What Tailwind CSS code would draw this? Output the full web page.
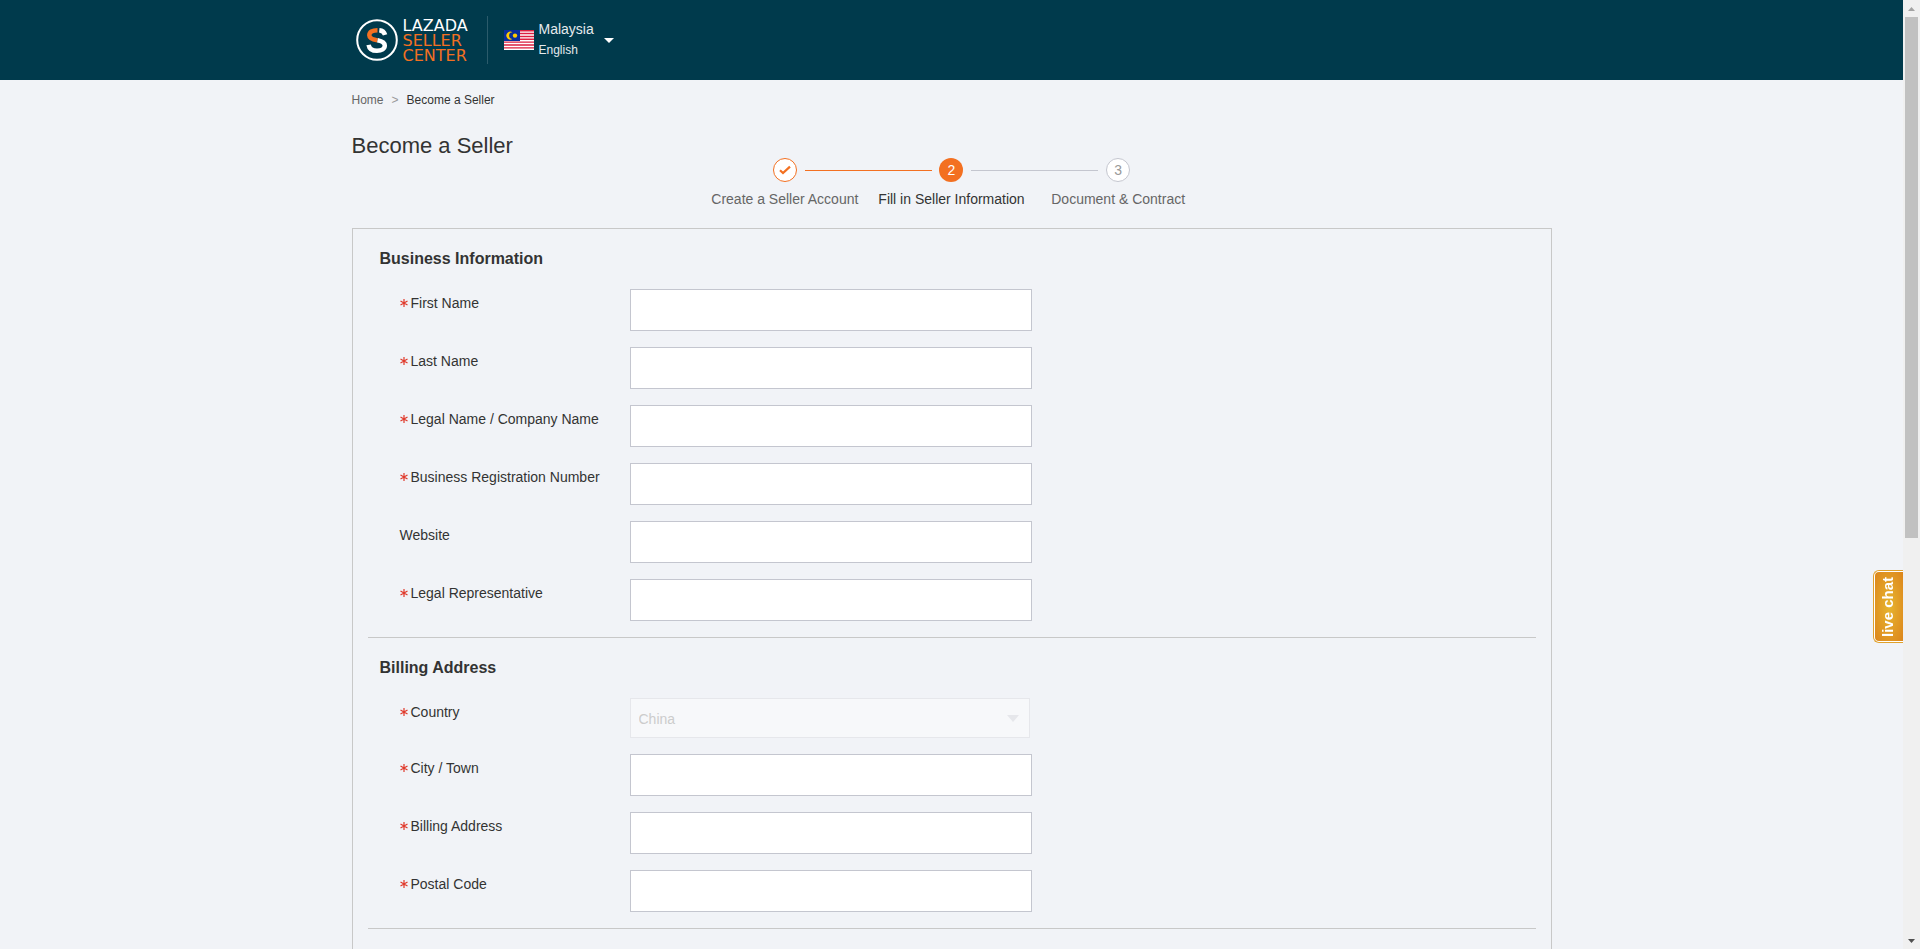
<!DOCTYPE html>
<html lang="en">
<head>
    <meta charset="UTF-8">
    <meta name="viewport" content="width=device-width, initial-scale=1.0">
    <title>Become a Seller</title>
    <script src="https://cdn.jsdelivr.net/npm/@tailwindcss/browser@4"></script>
</head>
<body class="flex h-screen overflow-hidden bg-[#f1f3f7] font-['Liberation_Sans',Arial,sans-serif] text-sm text-[#333]">
    <div class="flex-1 overflow-hidden">
        <header class="bg-[#003a4c]">
            <div class="mx-auto flex h-20 max-w-[1200px] items-center">
                <a href="#" class="flex items-center gap-[5px] pl-1" aria-label="Lazada Seller Center">
                    <svg class="size-[42px]" viewBox="0 0 42 42" fill="none">
                        <circle cx="21" cy="21" r="19.8" stroke="#fff" stroke-width="2"/>
                        <path d="M21.500 11.200c-5 0-8.200 1.900-8.200 5 0 3 3 4.200 8.200 5.200" stroke="#f37021" stroke-width="4.500"/>
                        <path d="M23.300 11.200c3 .3 5 1.800 5.800 4.600" stroke="#fff" stroke-width="4.500"/>
                        <path d="M21.500 21.200c4.900 1 7.300 2.500 7.300 5.300 0 3.200-3.200 5.300-7.800 5.300-4.800 0-7.800-2.200-8.400-6" stroke="#fff" stroke-width="4.500"/>
                    </svg>
                    <span class="flex w-[72px] flex-col font-['DejaVu_Sans',sans-serif] text-base leading-[15px] text-[#f37021]">
                        <span class="text-white">LAZADA</span>
                        <span>SELLER</span>
                        <span>CENTER</span>
                    </span>
                </a>
                <div class="ml-3 h-12 w-px bg-[#2b5b6b]"></div>
                <button type="button" class="ml-4 flex items-center text-left text-[#e6ebed]">
                    <svg class="h-5 w-[30px]" viewBox="0 0 30 20">
                        <path fill="#fff" d="M0 0h30v20H0z"/>
                        <path stroke="#dc1f3f" stroke-width="1.430" d="M0 .7h30M0 3.570h30M0 6.430h30M0 9.280h30M0 12.140h30M0 15h30M0 17.860h30"/>
                        <path fill="#0a2f9e" d="M0 0h16v11H0z"/>
                        <g fill="#fc0">
                            <path d="M8.500 2.200a4 4 0 1 0 0 6.800 3.400 3.400 0 1 1 0-6.800z"/>
                            <circle cx="11" cy="5.600" r="2.200"/>
                        </g>
                    </svg>
                    <span class="ml-[5px] flex flex-col leading-5">
                        <span>Malaysia</span>
                        <span class="text-xs leading-[22px]">English</span>
                    </span>
                    <svg class="ml-[10px] h-[5px] w-[10px]" viewBox="0 0 10 5"><path fill="#fff" d="M0 0h10L5 5z"/></svg>
                </button>
            </div>
        </header>

        <main class="mx-auto max-w-[1200px]">
            <nav class="flex gap-2 pt-3 text-xs leading-4" aria-label="Breadcrumb">
                <a href="#" class="text-[#666]">Home</a>
                <span class="text-[#999]">&gt;</span>
                <span>Become a Seller</span>
            </nav>
            <h1 class="mt-[26px] text-[22px] leading-6">Become a Seller</h1>

            <ol class="mx-auto grid w-[500px] grid-cols-3 text-center leading-5 text-[#666]">
                <li class="relative flex flex-col items-center">
                    <span class="flex size-6 items-center justify-center rounded-full border border-[#f37021] bg-white">
                        <svg class="size-3" viewBox="0 0 12 12" fill="none" stroke="#f37021" stroke-width="2.200"><path d="M1 6.200l3 2.900L11 2.600"/></svg>
                    </span>
                    <span class="absolute top-3 left-[calc(50%+20px)] h-px w-[127px] bg-[#f37021]"></span>
                    <span class="mt-[7px] whitespace-nowrap">Create a Seller Account</span>
                </li>
                <li class="relative flex flex-col items-center">
                    <span class="flex size-6 items-center justify-center rounded-full bg-[#f37021] text-white">2</span>
                    <span class="absolute top-3 left-[calc(50%+20px)] h-px w-[127px] bg-[#c4c6cf]"></span>
                    <span class="mt-[7px] whitespace-nowrap text-[#333]">Fill in Seller Information</span>
                </li>
                <li class="flex flex-col items-center">
                    <span class="flex size-6 items-center justify-center rounded-full border border-[#c4c6cf] bg-white text-[#999]">3</span>
                    <span class="mt-[7px] whitespace-nowrap">Document &amp; Contract</span>
                </li>
            </ol>

            <form class="mt-[19px] border border-[#c8c8c8] px-[15px] pb-16">
                <section class="border-b border-[#c8c8c8] pb-4">
                    <h2 class="pl-3 text-base leading-[60px] font-bold">Business Information</h2>
                    <div class="flex flex-col gap-4 pl-8">
                        <div class="flex">
                            <label for="firstName" class="flex w-[230px] gap-[3px] leading-7"><svg class="mt-[10px] size-2" viewBox="0 0 8 8" stroke="#e0392b" stroke-width="1.200"><path d="M4 0v8M.5 2l7 4M7.500 2l-7 4"/></svg>First Name</label>
                            <input type="text" id="firstName" class="h-[42px] w-[402px] border border-[#c4c6cf] bg-white px-2">
                        </div>
                        <div class="flex">
                            <label for="lastName" class="flex w-[230px] gap-[3px] leading-7"><svg class="mt-[10px] size-2" viewBox="0 0 8 8" stroke="#e0392b" stroke-width="1.200"><path d="M4 0v8M.5 2l7 4M7.500 2l-7 4"/></svg>Last Name</label>
                            <input type="text" id="lastName" class="h-[42px] w-[402px] border border-[#c4c6cf] bg-white px-2">
                        </div>
                        <div class="flex">
                            <label for="companyName" class="flex w-[230px] gap-[3px] leading-7"><svg class="mt-[10px] size-2" viewBox="0 0 8 8" stroke="#e0392b" stroke-width="1.200"><path d="M4 0v8M.5 2l7 4M7.500 2l-7 4"/></svg>Legal Name / Company Name</label>
                            <input type="text" id="companyName" class="h-[42px] w-[402px] border border-[#c4c6cf] bg-white px-2">
                        </div>
                        <div class="flex">
                            <label for="registrationNumber" class="flex w-[230px] gap-[3px] leading-7"><svg class="mt-[10px] size-2" viewBox="0 0 8 8" stroke="#e0392b" stroke-width="1.200"><path d="M4 0v8M.5 2l7 4M7.500 2l-7 4"/></svg>Business Registration Number</label>
                            <input type="text" id="registrationNumber" class="h-[42px] w-[402px] border border-[#c4c6cf] bg-white px-2">
                        </div>
                        <div class="flex">
                            <label for="website" class="flex w-[230px] leading-7">Website</label>
                            <input type="text" id="website" class="h-[42px] w-[402px] border border-[#c4c6cf] bg-white px-2">
                        </div>
                        <div class="flex">
                            <label for="representative" class="flex w-[230px] gap-[3px] leading-7"><svg class="mt-[10px] size-2" viewBox="0 0 8 8" stroke="#e0392b" stroke-width="1.200"><path d="M4 0v8M.5 2l7 4M7.500 2l-7 4"/></svg>Legal Representative</label>
                            <input type="text" id="representative" class="h-[42px] w-[402px] border border-[#c4c6cf] bg-white px-2">
                        </div>
                    </div>
                </section>

                <section class="border-b border-[#c8c8c8] pb-4">
                    <h2 class="pl-3 text-base leading-[60px] font-bold">Billing Address</h2>
                    <div class="flex flex-col gap-4 pl-8">
                        <div class="flex">
                            <label for="country" class="flex w-[230px] gap-[3px] leading-7"><svg class="mt-[10px] size-2" viewBox="0 0 8 8" stroke="#e0392b" stroke-width="1.200"><path d="M4 0v8M.5 2l7 4M7.500 2l-7 4"/></svg>Country</label>
                            <div class="relative">
                                <select id="country" disabled class="h-10 w-[400px] appearance-none border border-[#e6e7eb] bg-[#f7f8fa] px-2 pt-0.5 text-[#ccc] opacity-100">
                                    <option>China</option>
                                </select>
                                <svg class="pointer-events-none absolute top-[17px] right-[11px] h-[7px] w-3" viewBox="0 0 12 7"><path fill="#e6e7eb" d="M0 0h12L6 7z"/></svg>
                            </div>
                        </div>
                        <div class="flex">
                            <label for="city" class="flex w-[230px] gap-[3px] leading-7"><svg class="mt-[10px] size-2" viewBox="0 0 8 8" stroke="#e0392b" stroke-width="1.200"><path d="M4 0v8M.5 2l7 4M7.500 2l-7 4"/></svg>City / Town</label>
                            <input type="text" id="city" class="h-[42px] w-[402px] border border-[#c4c6cf] bg-white px-2">
                        </div>
                        <div class="flex">
                            <label for="billingAddress" class="flex w-[230px] gap-[3px] leading-7"><svg class="mt-[10px] size-2" viewBox="0 0 8 8" stroke="#e0392b" stroke-width="1.200"><path d="M4 0v8M.5 2l7 4M7.500 2l-7 4"/></svg>Billing Address</label>
                            <input type="text" id="billingAddress" class="h-[42px] w-[402px] border border-[#c4c6cf] bg-white px-2">
                        </div>
                        <div class="flex">
                            <label for="postalCode" class="flex w-[230px] gap-[3px] leading-7"><svg class="mt-[10px] size-2" viewBox="0 0 8 8" stroke="#e0392b" stroke-width="1.200"><path d="M4 0v8M.5 2l7 4M7.500 2l-7 4"/></svg>Postal Code</label>
                            <input type="text" id="postalCode" class="h-[42px] w-[402px] border border-[#c4c6cf] bg-white px-2">
                        </div>
                    </div>
                </section>
            </form>
        </main>
    </div>

    <!-- scrollbar -->
    <div class="flex w-[17px] flex-col items-center bg-[#f0f0f0]" aria-hidden="true">
        <div class="flex h-[17px] items-center"><svg class="h-1 w-[7px]" viewBox="0 0 7 4"><path fill="#a3a3a3" d="M0 4h7L3.500 0z"/></svg></div>
        <div class="h-[521px] w-[13px] bg-[#c1c1c1]"></div>
        <div class="mt-auto flex h-[17px] items-center"><svg class="h-1 w-[7px]" viewBox="0 0 7 4"><path fill="#505050" d="M0 0h7L3.500 4z"/></svg></div>
    </div>

    <button type="button" class="fixed top-[570px] right-[17px] flex h-[73px] w-[30px] items-center justify-center rounded-l-md border border-r-0 border-[#e0a12c] bg-white py-px pl-px">
        <span class="flex size-full rotate-180 items-center justify-center rounded-r bg-radial from-[#e6b52f] to-[#dc851b] pl-0.5 text-[15px] leading-5 font-bold text-white [writing-mode:vertical-rl]">live chat</span>
    </button>
</body>
</html>
